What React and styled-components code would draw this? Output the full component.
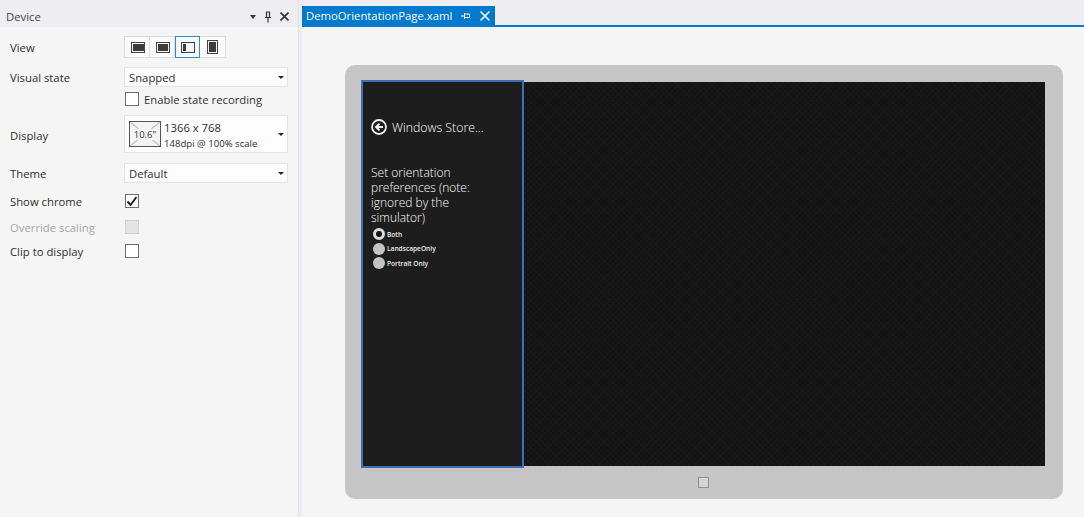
import React from "react";
import styled, { createGlobalStyle, css } from "styled-components";

const Global = createGlobalStyle`
  html, body { margin: 0; padding: 0; height: 100%; background: #eeeef2; }
  #root { height: 517px; }
  * { box-sizing: border-box; }
`;

const Root = styled.div`
  width: 1084px;
  height: 517px;
  display: flex;
  overflow: hidden;
  background: #eeeef2;
  font-family: "Open Sans", "Noto Sans", sans-serif;
  font-size: 11.3px;
  color: #1e1e1e;
`;

const Panel = styled.aside`
  width: 298px;
  flex: none;
  display: flex;
  flex-direction: column;
`;

const TitleBar = styled.div`
  height: 27px;
  flex: none;
  display: flex;
  align-items: center;
  padding: 6px 9px 0 6px;
  gap: 7px;
  color: #444;
  background: #eeeef2;
`;

const Grip = styled.div`
  flex: 1;
  height: 5px;
  background-image: radial-gradient(#b4b4bc 0.6px, transparent 0.7px);
  background-size: 2px 2px;
`;

const TitleIcons = styled.div`
  display: flex;
  align-items: center;
  gap: 7px;
  margin-left: 3px;
`;

const Form = styled.div`
  flex: 1;
  background: #f5f5f5;
  display: grid;
  grid-template-columns: 114px 164px;
  grid-auto-rows: min-content;
  padding: 7px 0 0 10px;
  color: #333;
`;

const Label = styled.div`
  display: flex;
  align-items: center;
  height: ${(p) => p.$h}px;
  margin-top: ${(p) => p.$mt || 0}px;
  color: ${(p) => (p.$off ? "#a6a6a6" : "#2e2e2e")};
`;

const Cell = styled.div`
  display: flex;
  align-items: center;
  height: ${(p) => p.$h}px;
  margin-top: ${(p) => p.$mt || 0}px;
`;

const ViewGroup = styled.div`
  display: flex;
  height: 22px;
  background: #fcfcfc;
  border: 1px solid #dcdcdc;
`;

const ViewButton = styled.button`
  width: 25px;
  height: 22px;
  margin: -1px 0;
  padding: 0;
  display: flex;
  align-items: center;
  justify-content: center;
  background: transparent;
  border: 1px solid transparent;
  border-right-color: #dcdcdc;
  ${(p) =>
    p.$active &&
    css`
      border: 1px solid #3a88c4;
      background: #f5fafd;
    `}
  &:last-child { border-right-color: transparent; }
`;

const Select = styled.div`
  width: 164px;
  height: ${(p) => p.$h || 20}px;
  background: #fdfdfd;
  border: 1px solid #e4e4e4;
  display: flex;
  align-items: center;
  padding: 0 3px 0 4px;
  gap: 3px;
  color: #2e2e2e;
`;

const SelectText = styled.div`
  flex: 1;
  min-width: 0;
`;

const DisplayText = styled(SelectText)`
  padding-top: 3px;
`;

const Caret = styled.span`
  width: 0;
  height: 0;
  border-left: 3px solid transparent;
  border-right: 3px solid transparent;
  border-top: 3px solid #222;
`;

const TitleCaret = styled(Caret)`
  border-left-width: 3.5px;
  border-right-width: 3.5px;
  border-top-width: 4px;
  border-top-color: #333;
`;

const Check = styled.span`
  width: 14px;
  height: 14px;
  flex: none;
  margin-left: 1px;
  display: flex;
  align-items: center;
  justify-content: center;
  border: 1px solid ${(p) => (p.$off ? "#d0d0d0" : "#6e6e6e")};
  background: ${(p) => (p.$off ? "#e4e4e4" : "#fff")};
`;

const CheckLabel = styled.span`
  margin-left: 5px;
`;

const DisplayThumb = styled.div`
  position: relative;
  width: 32px;
  height: 26px;
  flex: none;
  border: 1.5px solid #555;
  background: #f4f4f4;
  display: flex;
  align-items: center;
  justify-content: center;
  font-size: 9.5px;
  color: #333;
`;

const DisplayLines = styled.svg`
  position: absolute;
  inset: 0;
  width: 100%;
  height: 100%;
`;

const ThumbText = styled.span`
  position: relative;
  background: #f4f4f4;
  line-height: 11px;
`;

const DisplayMain = styled.div`
  line-height: 16px;
`;

const DisplaySub = styled.div`
  font-size: 9.6px;
  line-height: 16px;
  white-space: nowrap;
`;

const Splitter = styled.div`
  width: 4px;
  flex: none;
  background: #eeeef2;
  border-left: 1px solid #e2e2e6;
`;

const Main = styled.main`
  flex: 1;
  display: flex;
  flex-direction: column;
  min-width: 0;
`;

const TabStrip = styled.div`
  height: 27px;
  flex: none;
  padding-top: 6px;
  background: #eeeef2;
  border-bottom: 2px solid #007acc;
`;

const Tab = styled.div`
  width: 193px;
  height: 19px;
  background: #007acc;
  color: #fff;
  display: flex;
  align-items: center;
  padding: 0 5px 0 4px;
`;

const TabName = styled.span`
  flex: 1;
  line-height: 19px;
  white-space: nowrap;
`;

const TabIcons = styled.span`
  display: flex;
  align-items: center;
  gap: 9px;
`;

const Surface = styled.div`
  flex: 1;
  background: #f5f5f5;
  padding: 38px 0 0 43px;
`;

const Tablet = styled.div`
  width: 718px;
  height: 434px;
  padding: 17px 17px 0;
  background: #c6c6c6;
  border-radius: 10px;
  display: flex;
  flex-direction: column;
`;

const Screen = styled.div`
  width: 683px;
  height: 384px;
  flex: none;
  display: flex;
  background-color: #131313;
  background-image: repeating-linear-gradient(45deg, #181818 0 1px, transparent 1px 4px),
    repeating-linear-gradient(-45deg, #181818 0 1px, transparent 1px 4px);
`;

/* the selection frame sticks out of the screen a little */
const Snapped = styled.div`
  width: 163px;
  height: 388px;
  flex: none;
  margin: -2px 0 0 -1px;
  background: #1d1d1d;
  border: 2px solid #3f6cbb;
  color: #fff;
  padding: 36px 0 0 8px;
`;

const AppHeader = styled.div`
  display: flex;
  align-items: center;
  gap: 5px;
  font-size: 12.3px;
  font-weight: 300;
  height: 18px;
`;

const Intro = styled.div`
  margin-top: 29px;
  width: 120px;
  font-size: 12px;
  line-height: 15px;
  font-weight: 300;
`;

const RadioList = styled.div`
  margin-top: 3px;
  margin-left: 2px;
  display: flex;
  flex-direction: column;
  gap: 2.5px;
`;

const RadioRow = styled.div`
  display: flex;
  align-items: center;
  height: 12px;
  gap: 2px;
  font-size: 6.6px;
  font-weight: 600;
  color: #eee;
`;

const Radio = styled.span`
  width: 12px;
  height: 12px;
  border-radius: 50%;
  flex: none;
  background: ${(p) => (p.$on ? "#111" : "#c4c4c4")};
  border: ${(p) => (p.$on ? "3px solid #dcdcdc" : "none")};
`;

const HomeRow = styled.div`
  flex: 1;
  display: flex;
  align-items: center;
  justify-content: center;
`;

const HomeButton = styled.span`
  width: 11px;
  height: 11px;
  margin-right: 2px;
  border: 1px solid #8f8f8f;
  background: #d4d4d4;
`;

const Pin = ({ color = "#333" }) => (
  <svg width="10" height="12" viewBox="0 0 10 12">
    <path d="M3 1h4M3.5 1v5M6.5 1v5M2 6.5h6M5 7v4.5" stroke={color} strokeWidth="1.2" fill="none" />
    <path d="M6 1.5h1v4.5h-1z" fill={color} />
  </svg>
);

const PinFlat = () => (
  <svg width="10" height="10" viewBox="0 0 10 10">
    <path d="M0 5h3M3.5 2v6M3.5 3h5M3.5 6.5h5M8.5 3v3.5" stroke="#fff" strokeWidth="1" fill="none" />
  </svg>
);

const Cross = ({ color = "#333", size = 9, w = 1.6 }) => (
  <svg width={size} height={size} viewBox="0 0 9 9">
    <path d="M0.5 0.5l8 8M8.5 0.5l-8 8" stroke={color} strokeWidth={w} fill="none" />
  </svg>
);

const ViewIcon = ({ kind }) => {
  if (kind === "snapped") {
    return (
      <svg width="14" height="11" viewBox="0 0 14 11">
        <rect x="0.5" y="0.5" width="13" height="10" fill="#f4f4f4" stroke="#444" />
        <rect x="2" y="2" width="3" height="7" fill="#3c3c3c" />
      </svg>
    );
  }
  if (kind === "portrait") {
    return (
      <svg width="11" height="14" viewBox="0 0 11 14">
        <rect x="0.5" y="0.5" width="10" height="13" fill="#f4f4f4" stroke="#444" />
        <rect x="2" y="2" width="7" height="10" fill="#3c3c3c" />
      </svg>
    );
  }
  return (
    <svg width="14" height="11" viewBox="0 0 14 11">
      <rect x="0.5" y="0.5" width="13" height="10" fill="#f4f4f4" stroke="#444" />
      <rect x="2" y="2" width={kind === "filled" ? 11 : 10} height="7" fill="#3c3c3c" />
    </svg>
  );
};

const BackArrow = () => (
  <svg width="16" height="16" viewBox="0 0 16 16">
    <circle cx="8" cy="8" r="7" fill="none" stroke="#f2f2f2" strokeWidth="1.8" />
    <path d="M12 8H5.5M8.5 4.6L5 8l3.5 3.4" fill="none" stroke="#f2f2f2" strokeWidth="2" />
  </svg>
);

const Tick = () => (
  <svg width="12" height="11" viewBox="0 0 12 11">
    <path d="M1.5 5.5l3 3.5 6-8" fill="none" stroke="#222" strokeWidth="2" />
  </svg>
);

export default function App() {
  return (
    <Root>
      <Global />
      <Panel>
        <TitleBar>
          <span>Device</span>
          <Grip />
          <TitleIcons>
            <TitleCaret />
            <Pin />
            <Cross />
          </TitleIcons>
        </TitleBar>
        <Form>
          <Label $h={26}>View</Label>
          <Cell $h={26}>
            <ViewGroup>
              <ViewButton><ViewIcon kind="filled" /></ViewButton>
              <ViewButton><ViewIcon kind="fill" /></ViewButton>
              <ViewButton $active><ViewIcon kind="snapped" /></ViewButton>
              <ViewButton><ViewIcon kind="portrait" /></ViewButton>
            </ViewGroup>
          </Cell>

          <Label $h={20} $mt={7}>Visual state</Label>
          <Cell $h={20} $mt={7}>
            <Select><SelectText>Snapped</SelectText><Caret /></Select>
          </Cell>

          <span />
          <Cell $h={24}>
            <Check />
            <CheckLabel>Enable state recording</CheckLabel>
          </Cell>

          <Label $h={40} $mt={4}>Display</Label>
          <Cell $h={38} $mt={4}>
            <Select $h={38}>
              <DisplayThumb>
                <DisplayLines viewBox="0 0 28 22" preserveAspectRatio="none">
                  <path d="M0 0L28 22M28 0L0 22" stroke="#bdbdbd" strokeWidth="1" />
                </DisplayLines>
                <ThumbText>10.6"</ThumbText>
              </DisplayThumb>
              <DisplayText>
                <DisplayMain>1366 x 768</DisplayMain>
                <DisplaySub>148dpi @ 100% scale</DisplaySub>
              </DisplayText>
              <Caret />
            </Select>
          </Cell>

          <Label $h={20} $mt={8}>Theme</Label>
          <Cell $h={20} $mt={8}>
            <Select><SelectText>Default</SelectText><Caret /></Select>
          </Cell>

          <Label $h={26} $mt={5}>Show chrome</Label>
          <Cell $h={26} $mt={5}><Check><Tick /></Check></Cell>

          <Label $h={26} $off>Override scaling</Label>
          <Cell $h={26}><Check $off /></Cell>

          <Label $h={22}>Clip to display</Label>
          <Cell $h={22}><Check /></Cell>
        </Form>
      </Panel>
      <Splitter />
      <Main>
        <TabStrip>
          <Tab>
            <TabName>DemoOrientationPage.xaml</TabName>
            <TabIcons>
              <PinFlat />
              <Cross color="#fff" size={10} w={1.4} />
            </TabIcons>
          </Tab>
        </TabStrip>
        <Surface>
          <Tablet>
            <Screen>
              <Snapped>
                <AppHeader>
                  <BackArrow />
                  <span>Windows Store...</span>
                </AppHeader>
                <Intro>Set orientation preferences (note: ignored by the simulator)</Intro>
                <RadioList>
                  <RadioRow><Radio $on />Both</RadioRow>
                  <RadioRow><Radio />LandscapeOnly</RadioRow>
                  <RadioRow><Radio />Portrait Only</RadioRow>
                </RadioList>
              </Snapped>
            </Screen>
            <HomeRow><HomeButton /></HomeRow>
          </Tablet>
        </Surface>
      </Main>
    </Root>
  );
}
